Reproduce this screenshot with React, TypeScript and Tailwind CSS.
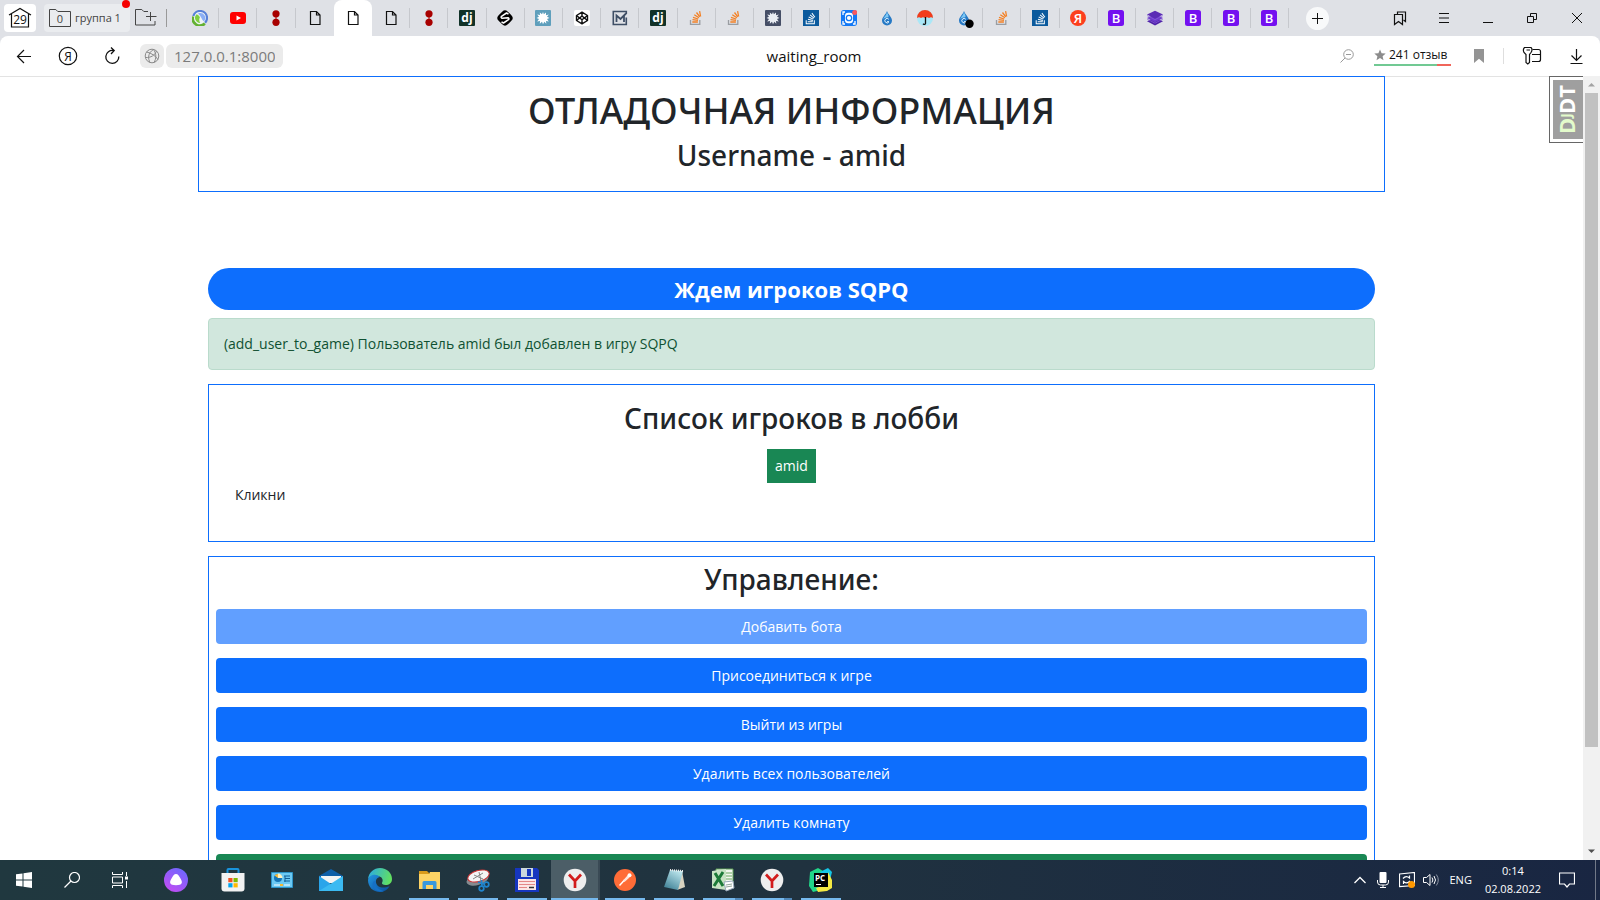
import type { ReactNode } from "react";
import { FaStackOverflow } from "react-icons/fa";

type IconProps = { children: ReactNode; size?: number; box?: number };

function Svg({ children, size = 16, box = 16 }: IconProps) {
  return (
    <svg width={size} height={size} viewBox={`0 0 ${box} ${box}`} fill="none" aria-hidden="true" className="block shrink-0">
      {children}
    </svg>
  );
}

/* ---------- Tab favicons ---------- */

const Clojure = () => (
  <Svg>
    <circle cx="8" cy="8" r="7" fill="#eef3f5" />
    <path d="M1.300 6A7 7 0 0 1 15 7.500 7 7 0 0 1 13 12.800" stroke="#5881d8" strokeWidth="2.200" />
    <path d="M1 6.500a7.100 7.100 0 0 0 11.800 7" stroke="#63b132" strokeWidth="2.600" />
    <path d="M7 3.100a5 5 0 0 1 5 8.100C9.800 10.500 9.500 6 6 3.700Z" fill="#8aaef5" />
    <path d="M8.200 13A5 5 0 0 1 4.700 4.300c2 .9 2.700 2 3.200 3.200-1 1.500-.9 3.500.3 5.500Z" fill="#7fcf3f" />
  </Svg>
);
const Youtube = () => (
  <Svg>
    <rect y="2" width="16" height="12" rx="3" fill="#f00" />
    <path d="m6.500 5.500 4.500 2.500-4.500 2.500Z" fill="#fff" />
  </Svg>
);
const Dots = () => (
  <Svg>
    <path d="M8 2v12" stroke="#a80000" />
    <circle cx="8" cy="3.800" r="3.600" fill="#a80000" />
    <circle cx="8" cy="12.300" r="3.600" fill="#a80000" />
  </Svg>
);
const File = () => (
  <Svg>
    <path d="M3.500 1.500h6l3.500 3.500v9.500H3.500Z M9.500 1.500V5H13" stroke="#111" strokeWidth="1.200" />
  </Svg>
);
const Django = () => (
  <Svg>
    <rect width="16" height="16" rx="1" fill="#113228" />
    <text x="8" y="11.500" textAnchor="middle" fontSize="12" fontWeight="700" fill="#fff" fontFamily="Open Sans, sans-serif">dj</text>
  </Svg>
);
const Slash = () => (
  <Svg>
    <rect x="1.500" y="1.500" width="13" height="13" rx="4" transform="rotate(45 8 8)" fill="#000" />
    <path d="M11.500 4.200 9.500 3 4.500 6.300q-1 1.200.5 1.900L11 7.800q1.600.6.500 1.900L6.500 13 4.500 11.800" stroke="#fff" strokeWidth="1.500" strokeLinejoin="round" />
  </Svg>
);
function Burst({ bg, center }: { bg: string; center: string }) {
  return (
    <Svg>
      <rect width="16" height="16" rx="1" fill={bg} />
      <path d="m8 2 .9 2.300L11 2.500v2.700l2.800-.7L12 6.800l2.500 1.200-2.500 1 1.800 2.500-2.800-.5.300 2.800-2-2L8 14.300l-1-2.500-2.200 2 .2-2.900-2.800.6L4 9 1.500 8 4 6.800 2.200 4.500 5 5.100l-.2-2.600 2.200 1.800Z" fill={center} />
    </Svg>
  );
}
const Codepen = () => (
  <Svg>
    <rect width="16" height="16" rx="2" fill="#fff" />
    <path d="m8 2.200 5.500 3.300v5L8 13.800l-5.500-3.300v-5ZM8 2.500v3.400M8 10v3.500M2.800 5.800 8 9.800l5.200-4M2.800 10.300 8 6l5.200 4.300" stroke="#111" strokeWidth="1.400" strokeLinejoin="round" />
  </Svg>
);
const Letter = () => (
  <Svg>
    <path d="M14.300 4V1.500H1.300v13h13V7.500" stroke="#3f4f66" strokeWidth="1.600" />
    <path d="M4.500 12V5.500L8.500 9 14 3.500M12 6v6" stroke="#3f4f66" strokeWidth="1.800" />
  </Svg>
);
const StackOrange = () => (
  <Svg>
    <path d="M2.500 10v4.300h9.300V10" stroke="#9a9da2" strokeWidth="1.300" />
    <path d="M4.300 12h5.600M4.500 9.700l5.500.6M5 7.300l5.200 1.700M6.300 4.700l4.600 3M8.500 2.500l3.300 4.300M11.600 1.200l1 5.300" stroke="#f48024" strokeWidth="1.300" />
  </Svg>
);
const StackBlue = () => (
  <span className="grid size-4 place-items-center bg-[#0b5a9d] text-[13px] text-white">
    <FaStackOverflow aria-hidden="true" />
  </span>
);
const Target = () => (
  <Svg>
    <rect width="16" height="16" rx="3" fill="#1479f5" />
    <path d="M4 2H2v3M12 14h2v-3M2 11v3h2" stroke="#fff" strokeWidth="1.300" />
    <rect x="4" y="2.800" width="8" height="10.400" rx="3" fill="#fff" />
    <circle cx="8" cy="8" r="2.700" stroke="#1479f5" strokeWidth="1.300" />
    <circle cx="13.700" cy="2.500" r="2.500" fill="#f8595f" />
  </Svg>
);
function Drop({ dot = false }: { dot?: boolean }) {
  return (
    <Svg size={20} box={20}>
      <path d="M10 3c1 3.500 5 6 5 9.500a5 5 0 0 1-10 0C5 9 9 6.500 10 3Z" fill="#2679c5" />
      <path d="M9.800 3.500C10 7 7 8.500 6.200 11.500c1-1.500 3-2.500 5.300-2.200C12 7 10.200 5.500 9.800 3.500Z" fill="#7cc8f5" />
      <path d="M11.800 11.300a2.200 2.200 0 1 0 .2 2.400h-2" stroke="#e6f5ff" strokeWidth="1" />
      {dot && <circle cx="15.500" cy="15.800" r="4.200" fill="#000" />}
    </Svg>
  );
}
const Umbrella = () => (
  <Svg>
    <circle cx="8" cy="8" r="8" fill="#a9e7f7" />
    <path d="M0 8a8 8 0 0 1 16 0q-2-1.500-4 0-2-1.500-4 0-2-1.500-4 0-2-1.500-4 0Z" fill="#f23c1b" />
    <path d="M8.500 7v6.500q-.8 1.800-2.500.2" stroke="#111" strokeWidth="1.300" />
  </Svg>
);
const YandexSmall = () => (
  <Svg>
    <circle cx="8" cy="8" r="8" fill="#fc3f1d" />
    <text x="8" y="12.500" textAnchor="middle" fontSize="13" fontWeight="600" fill="#fff" fontFamily="Open Sans, sans-serif">Я</text>
  </Svg>
);
const Bootstrap = () => (
  <Svg>
    <rect width="16" height="16" rx="2.500" fill="#7410f0" />
    <text x="8" y="12.500" textAnchor="middle" fontSize="13" fontWeight="600" fill="#fff" fontFamily="Open Sans, sans-serif">B</text>
  </Svg>
);
const Layers = () => (
  <Svg>
    <path d="m8 7.500 8 3.800L8 15.500l-8-4.200Z" fill="#4f22a8" />
    <path d="m8 4 8 4-8 4.200L0 8Z" fill="#6d3bcb" />
    <path d="m8 .8 8 3.700L8 8.700 0 4.500Z" fill="#5b2cb5" />
    <path d="m0 5.500 8 4.200 8-4.200M0 9l8 4.200L16 9" stroke="#8a60dc" strokeWidth=".7" />
  </Svg>
);

type Tab = { name: string; icon: ReactNode };
const tabs: Tab[] = [
  { name: "Clojure", icon: <Clojure /> },
  { name: "YouTube", icon: <Youtube /> },
  { name: "Dots", icon: <Dots /> },
  { name: "Page", icon: <File /> },
  { name: "waiting_room", icon: <File /> },
  { name: "Page", icon: <File /> },
  { name: "Dots", icon: <Dots /> },
  { name: "Django", icon: <Django /> },
  { name: "Notes", icon: <Slash /> },
  { name: "Burst", icon: <Burst bg="#5f9fbc" center="#fff" /> },
  { name: "CodePen", icon: <Codepen /> },
  { name: "M", icon: <Letter /> },
  { name: "Django", icon: <Django /> },
  { name: "Stack Overflow", icon: <StackOrange /> },
  { name: "Stack Overflow", icon: <StackOrange /> },
  { name: "Burst", icon: <Burst bg="#454e66" center="#e9edf3" /> },
  { name: "Stack Overflow", icon: <StackBlue /> },
  { name: "Target", icon: <Target /> },
  { name: "Drop", icon: <Drop /> },
  { name: "Umbrella", icon: <Umbrella /> },
  { name: "Drop", icon: <Drop dot /> },
  { name: "Stack Overflow", icon: <StackOrange /> },
  { name: "Stack Overflow", icon: <StackBlue /> },
  { name: "Яндекс", icon: <YandexSmall /> },
  { name: "Bootstrap", icon: <Bootstrap /> },
  { name: "Layers", icon: <Layers /> },
  { name: "Bootstrap", icon: <Bootstrap /> },
  { name: "Bootstrap", icon: <Bootstrap /> },
  { name: "Bootstrap", icon: <Bootstrap /> },
];
const ACTIVE_TAB = 4;

function TabBar() {
  return (
    <header className="flex h-9 shrink-0 items-stretch bg-[#dfe1e6]">
      <div className="flex w-[181px] shrink-0 items-center pl-1">
        <button aria-label="29 вкладок" className="grid h-7 w-8 place-items-center rounded bg-white">
          <Svg size={24} box={24}>
            <path d="m1 9 11-6.500L23 9M3.500 8v13h17V8" stroke="#111" strokeWidth="1.200" />
            <text x="12" y="17.500" textAnchor="middle" fontSize="12" fill="#111" fontFamily="Open Sans, sans-serif">29</text>
          </Svg>
        </button>
        <div className="relative ml-2">
          <button className="flex h-7 w-[86px] items-center gap-1 rounded bg-[#eaecef] pl-[5px] font-['Open_Sans',sans-serif] text-[11px] whitespace-nowrap text-[#444]">
            <Svg size={22} box={22}>
              <path d="M.5 2.500h6.300l2 2h12.700v15H.5Z" stroke="#444" />
              <text x="11" y="16" textAnchor="middle" fontSize="11" fill="#444" fontFamily="Open Sans, sans-serif">0</text>
            </Svg>
            группа 1
          </button>
          <span className="absolute -top-1 right-0 size-2 rounded-full bg-[#f50000]" />
        </div>
        <button aria-label="Новая группа" className="ml-[5px]">
          <Svg size={22} box={22}>
            <path d="M13 4.500H8.800l-2-2H.5v15.500h19.500v-4M15.500 5v9M11 9.500h10.500" stroke="#444" />
          </Svg>
        </button>
        <span className="ml-[9px] h-[18px] w-px bg-[#999]" />
      </div>
      <nav aria-label="Вкладки" className="flex min-w-0 flex-1">
        {tabs.map((tab, i) => (
          <div key={i} className={i === ACTIVE_TAB ? "flex min-w-0 flex-1 rounded-t-lg bg-white" : "flex min-w-0 flex-1 items-center"}>
            <button aria-label={tab.name} className="grid h-full flex-1 place-items-center">{tab.icon}</button>
            {i !== ACTIVE_TAB && i !== ACTIVE_TAB - 1 && <span className="h-5 w-px bg-[#c6c8cd]" />}
          </div>
        ))}
      </nav>
      <div className="flex w-[311px] shrink-0 items-center pl-[17px]">
        <button aria-label="Новая вкладка" className="grid size-[23px] place-items-center rounded-full bg-[#f8f9fa]">
          <Svg size={11} box={11}><path d="M5.500 0v11M0 5.500h11" stroke="#111" /></Svg>
        </button>
        <div className="ml-auto flex">
          <button aria-label="Закладки" className="grid h-9 w-11 place-items-center">
            <Svg>
              <path d="M2.500 4.500h8v10l-4-3-4 3Z" stroke="#111" strokeWidth="1.200" />
              <path d="M5.500 4V2h8v9.500l-2-1.500" stroke="#111" strokeWidth="1.200" />
            </Svg>
          </button>
          <button aria-label="Меню" className="grid h-9 w-11 place-items-center">
            <Svg size={10} box={10}><path d="M0 .5h10M0 5h10M0 9.500h10" stroke="#111" /></Svg>
          </button>
          <button aria-label="Свернуть" className="grid h-9 w-11 place-items-center">
            <Svg size={10} box={10}><path d="M0 9.500h10" stroke="#111" /></Svg>
          </button>
          <button aria-label="Развернуть" className="grid h-9 w-11 place-items-center">
            <Svg size={10} box={10}><path d="M.5 3.500h6v6h-6ZM3.500 3V.5h6v6H7" stroke="#111" /></Svg>
          </button>
          <button aria-label="Закрыть" className="grid h-9 w-[46px] place-items-center">
            <Svg size={10} box={10}><path d="m0 0 10 10M10 0 0 10" stroke="#111" /></Svg>
          </button>
        </div>
      </div>
    </header>
  );
}

function Toolbar() {
  return (
    <div className="shrink-0 bg-[#dfe1e6]">
      <div className="flex h-10 items-center rounded-t-lg bg-white">
        <div className="flex w-[288px] shrink-0 items-center">
          <button aria-label="Назад" className="grid h-10 w-12 place-items-center">
            <Svg><path d="M15 8.500H1.500M8 2 1.500 8.500 8 15" stroke="#111" strokeWidth="1.200" /></Svg>
          </button>
          <button aria-label="Яндекс" className="grid h-10 w-10 place-items-center">
            <Svg size={20} box={20}>
              <circle cx="10" cy="10" r="8.700" stroke="#111" strokeWidth="1.200" />
              <text x="10" y="14.500" textAnchor="middle" fontSize="12" fill="#111" fontFamily="Open Sans, sans-serif">Я</text>
            </Svg>
          </button>
          <button aria-label="Обновить" className="grid h-10 w-[48px] place-items-center">
            <Svg size={18} box={18}><path d="M10.500 3.500a6.500 6.500 0 1 0 5.300 6M8 .5l3.200 3L8 7" stroke="#111" strokeWidth="1.300" /></Svg>
          </button>
          <button aria-label="Сведения о сайте" className="ml-1 grid size-6 place-items-center rounded-md bg-[#ebebeb]">
            <Svg>
              <circle cx="8" cy="8" r="6.800" stroke="#8a8a8a" />
              <path d="M9.500 1.500C3.500 5 4 11 6 14.500M2.500 4c5 1 9 4 11.500 7.500M1.500 9.500C7 10 11 7 12.500 3M9.500 1.500c3 4 3 9 .5 13" stroke="#8a8a8a" />
            </Svg>
          </button>
          <input aria-label="Адрес" defaultValue="127.0.0.1:8000" className="ml-0.5 h-6 w-[117px] rounded-md bg-[#ebebeb] px-2 font-['Open_Sans',sans-serif] text-[15px] text-[#7b7b7b] outline-none" />
        </div>
        <p className="flex-1 text-center font-['Open_Sans',sans-serif] text-[15px] text-[#111]">waiting_room</p>
        <div className="flex w-[260px] shrink-0 items-center">
          <button aria-label="Масштаб" className="grid w-[14px] place-items-center">
            <Svg size={14} box={14}>
              <circle cx="8.500" cy="5.500" r="4.800" stroke="#999" />
              <path d="M5 9 .5 13.500M6 5.500h5" stroke="#999" />
            </Svg>
          </button>
          <button className="ml-5 flex flex-col">
            <span className="flex h-[18px] items-center gap-[3px] pr-1 font-['Open_Sans',sans-serif] text-[12px] whitespace-nowrap text-[#111]">
              <Svg size={12} box={12}><path d="m6 .5 1.600 3.800 4.100.3-3.100 2.700.9 4L6 9.100l-3.500 2.200.9-4L.3 4.600l4.100-.3Z" fill="#8c8c8c" /></Svg>
              241 отзыв
            </span>
            <span className="flex h-0.5 w-full">
              <span className="flex-[63] bg-[#71c993]" />
              <span className="flex-[14] bg-[#f0655a]" />
            </span>
          </button>
          <div className="ml-auto flex items-center">
            <button aria-label="Добавить закладку"><Svg size={14} box={14}><path d="M2 0h10v14L7 9.800 2 14Z" fill="#949494" /></Svg></button>
            <span className="ml-[17px] h-4 w-px bg-[#dedede]" />
            <button aria-label="Пароли и карты" className="ml-[18px]">
              <Svg size={20} box={20}>
                <path d="M2.500 1.500H9q2 2 0 5L7.500 8.500v8L5.800 18 4 16.500v-8L2 6.500q-1.500-3 .5-5ZM4.500 4H8" stroke="#111" strokeWidth="1.200" />
                <path d="M10.500 3.500h6q2 0 2 2v8q0 2-2 2H10M10 8.500h8.500" stroke="#111" strokeWidth="1.200" />
              </Svg>
            </button>
            <button aria-label="Загрузки" className="mr-[14px] ml-[28px]">
              <Svg><path d="M6.500 1v11M1.500 7.500l5 5 5-5M.5 15.500h12" stroke="#111" strokeWidth="1.200" /></Svg>
            </button>
          </div>
        </div>
      </div>
    </div>
  );
}

/* ---------- Page content ---------- */

const actions = [
  { label: "Добавить бота", style: "bg-[#619fff]", disabled: true },
  { label: "Присоединиться к игре", style: "bg-[#0d6efd]", disabled: false },
  { label: "Выйти из игры", style: "bg-[#0d6efd]", disabled: false },
  { label: "Удалить всех пользователей", style: "bg-[#0d6efd]", disabled: false },
  { label: "Удалить комнату", style: "bg-[#0d6efd]", disabled: false },
];

function Page() {
  return (
    <main className="min-w-0 flex-1 overflow-hidden font-['Open_Sans','Noto_Sans',sans-serif] text-[14px] text-[#212529]">
      <div className="flex">
        <div className="flex-1 border-t border-[#e3e3e3]" />
        <section className="h-[116px] w-3/4 border border-[#0d6efd] pt-3 text-center font-['Noto_Sans',sans-serif]">
          <h1 className="text-[36px] leading-[44px] font-medium">ОТЛАДОЧНАЯ ИНФОРМАЦИЯ</h1>
          <h2 className="mt-1 text-[28px] leading-9 font-medium">Username - amid</h2>
        </section>
        <div className="flex-1 border-t border-[#e3e3e3]" />
      </div>
      <div className="mx-auto w-3/4 px-[10px] pt-[76px]">
        <h3 className="rounded-full bg-[#0d6efd] py-[6px] text-center text-[22px] leading-[30px] font-bold text-white">Ждем игроков SQPQ</h3>
        <p role="alert" className="mt-2 rounded border border-[#badbcc] bg-[#d1e7dd] px-[15px] py-[14px] leading-[22px] text-[#0f5132]">
          (add_user_to_game) Пользователь amid был добавлен в игру SQPQ
        </p>
        <section className="mt-[14px] h-[158px] border border-[#0d6efd] px-[26px] pt-[15px]">
          <h2 className="text-center font-['Noto_Sans',sans-serif] text-[28px] leading-9 font-medium">Список игроков в лобби</h2>
          <div className="mt-[13px] flex justify-center">
            <span className="bg-[#198754] px-2 py-[6px] leading-[22px] text-white">amid</span>
          </div>
          <p className="leading-6">Кликни</p>
        </section>
        <section className="mt-[14px] border border-[#0d6efd] px-[7px] pt-1 pb-4">
          <h2 className="text-center font-['Noto_Sans',sans-serif] text-[28px] leading-9 font-medium">Управление:</h2>
          <div className="mt-3 flex flex-col gap-[14px]">
            {actions.map((a) => (
              <button key={a.label} disabled={a.disabled} className={`h-[35px] shrink-0 rounded text-white ${a.style}`}>
                {a.label}
              </button>
            ))}
            <button aria-label="Начать игру" className="h-[35px] shrink-0 rounded bg-[#198754]" />
          </div>
        </section>
      </div>
    </main>
  );
}

function Scrollbar() {
  return (
    <div aria-hidden="true" className="flex w-[17px] shrink-0 flex-col items-center bg-[#f1f1f1]">
      <div className="grid h-[17px] place-items-center"><Svg size={7} box={7}><path d="M0 5.500 3.500 2 7 5.500Z" fill="#a3a3a3" /></Svg></div>
      <div className="w-[13px] flex-[654] bg-[#c1c1c1]" />
      <div className="flex-[96]" />
      <div className="grid h-[17px] place-items-center"><Svg size={7} box={7}><path d="M0 1.500 3.500 5 7 1.500Z" fill="#505050" /></Svg></div>
    </div>
  );
}

/* ---------- Taskbar ---------- */

const YandexBrowser = () => (
  <Svg size={24} box={24}>
    <circle cx="12" cy="12" r="11.300" fill="#eee" />
    <path d="m6 6.500 6 6.500 6-6.500M12 12.500v7.500" stroke="#d21c1c" strokeWidth="2.700" />
  </Svg>
);

type TaskbarApp = { name: string; icon: ReactNode; running?: boolean; active?: boolean; stacked?: boolean };
const apps: TaskbarApp[] = [
  {
    name: "Microsoft Store",
    icon: (
      <Svg size={24} box={24}>
        <path d="M6.500 6V2q0-.9.900-.9h9.200q.9 0 .9.900v4" stroke="#1993dc" strokeWidth="2" />
        <path d="M.5 5h23v15.500q0 3-3 3h-17q-3 0-3-3Z" fill="#f2f2f2" />
        <path d="M7.300 10h4.200v4.200H7.300Z" fill="#f25022" /><path d="M12.500 10h4.200v4.200h-4.200Z" fill="#7fba00" />
        <path d="M7.300 15.200h4.200v4.200H7.300Z" fill="#00a4ef" /><path d="M12.500 15.200h4.200v4.200h-4.200Z" fill="#ffb900" />
      </Svg>
    ),
  },
  {
    name: "Панель управления",
    icon: (
      <Svg size={22} box={22}>
        <path d="M.5 3.500h21v15H.5Z" fill="#6cc9f3" stroke="#2d93c7" />
        <circle cx="7" cy="9" r="4" fill="#1676b8" /><path d="M7 9V4.500A4.500 4.500 0 0 1 11.500 9Z" fill="#fff2c0" /><path d="M7 9 3.500 6.500A4 4 0 0 1 7 5Z" fill="#f6b93b" />
        <path d="M13 7h6M14 9.500h5M13 12h6M14 7v6" stroke="#135f95" /><path d="M3 16h6M13 16h6" stroke="#fff" /><path d="M9 16h3" stroke="#f7b731" strokeWidth="2" />
      </Svg>
    ),
  },
  {
    name: "Почта",
    icon: (
      <Svg size={24} box={24}>
        <path d="M0 8 12 1l12 7v4H0Z" fill="#0f5fa8" /><path d="M2 8h20v7H2Z" fill="#f4f4f4" />
        <path d="m0 8 12 8 12-8v15H0Z" fill="#2aa5ea" /><path d="M0 23 24 8v15Z" fill="#43c3f5" opacity=".7" />
      </Svg>
    ),
  },
  {
    name: "Edge",
    icon: (
      <Svg size={24} box={24}>
        <defs>
          <linearGradient id="edge-top" x1="0" y1="0" x2="24" y2="8" gradientUnits="userSpaceOnUse"><stop stopColor="#2aa9e8" /><stop offset="1" stopColor="#62e05f" /></linearGradient>
          <linearGradient id="edge-body" x1="0" y1="8" x2="16" y2="24" gradientUnits="userSpaceOnUse"><stop stopColor="#2292dd" /><stop offset="1" stopColor="#0c55a3" /></linearGradient>
        </defs>
        <path d="M0 11C1 4 6 0 12 0c7 0 12 5 12 11 0 4-3 6-6.500 6-2.500 0-4-1-3.500-2.200 1.300-2 .8-5.300-2.500-6.300C7 7 2.500 8 0 11Z" fill="url(#edge-top)" />
        <path d="M0 12c1-5 8-7 12-3-3 .5-4.500 3-4 5.500C8.800 19 14 21 21.500 18.300 19 22.500 15 24 12 24 5 24 0 19 0 12Z" fill="url(#edge-body)" />
        <path d="M8 13c-2 4 1.500 9 8 10-5 2-11-1.500-11.500-6C4.300 14.500 6 12 8 13Z" fill="#1670c4" />
      </Svg>
    ),
  },
  {
    name: "Проводник",
    running: true,
    icon: (
      <Svg size={24} box={24}>
        <path d="M2 3h8l2 2v3H2Z" fill="#d99a1b" /><path d="M2 6h10l1-2h10v17H2Z" fill="#fdd365" />
        <path d="M5.500 21v-6.500q0-1.500 1.500-1.500h11q1.500 0 1.500 1.500V21H16v-4H9v4Z" fill="#3998dd" />
      </Svg>
    ),
  },
  {
    name: "Ножницы",
    running: true,
    icon: (
      <Svg size={24} box={24}>
        <ellipse cx="11.500" cy="11.500" rx="11.300" ry="5.500" transform="rotate(-16 11.500 11.500)" fill="#858b90" />
        <ellipse cx="12.500" cy="8" rx="11" ry="5.500" transform="rotate(-16 12.500 8)" fill="#f5f5f5" stroke="#d23535" />
        <path d="m7 11 10-6M8 7l9 4M13 4l2 9" stroke="#888" /><circle cx="15.500" cy="20.500" r="2.300" stroke="#2185ce" strokeWidth="1.700" />
        <circle cx="20.500" cy="16.500" r="2.300" stroke="#2185ce" strokeWidth="1.700" /><path d="m12 14 6.500 2M16 18.500 15.500 12" stroke="#2185ce" strokeWidth="1.700" />
      </Svg>
    ),
  },
  {
    name: "Total Commander",
    running: true,
    icon: (
      <Svg size={24} box={24}>
        <path d="M0 0h22l2 2v22H0Z" fill="#1636bf" /><path d="M6 0h12v9H6Z" fill="#ccd8dc" /><path d="M12 1h4v7h-4Z" fill="#1636bf" />
        <path d="M3 11h18v11H3Z" fill="#fbe5e5" /><path d="M4 13.500h16M4 16.500h16M4 19.500h8" stroke="#e38787" /><path d="M14 19.500h5" stroke="#333" strokeWidth="1.500" />
      </Svg>
    ),
  },
  { name: "Яндекс Браузер", running: true, active: true, icon: <YandexBrowser /> },
  {
    name: "Postman",
    running: true,
    icon: (
      <Svg size={24} box={24}>
        <circle cx="12" cy="12" r="11" fill="#ff6c37" />
        <path d="m6.500 17.500 5-5.500" stroke="#fff" strokeWidth="1.500" /><path d="m10 12.500 4.500-5 2 2-5 4.500Z" fill="#ffe5dc" /><circle cx="16.500" cy="7.300" r="2" fill="#fff" />
      </Svg>
    ),
  },
  {
    name: "Блокнот",
    running: true,
    icon: (
      <Svg size={24} box={24}>
        <defs><linearGradient id="note" x1="18" y1="2" x2="6" y2="22" gradientUnits="userSpaceOnUse"><stop stopColor="#c4ecf2" /><stop offset="1" stopColor="#3f8196" /></linearGradient></defs>
        <path d="m20 3 3 16-8 3Z" fill="#d8d3c0" /><path d="m8 2 13 1-5 19-14-3Z" fill="url(#note)" /><path d="m8 2 13 1" stroke="#eee" strokeWidth="2" strokeDasharray="1 1" />
      </Svg>
    ),
  },
  {
    name: "Excel",
    running: true,
    stacked: true,
    icon: (
      <Svg size={24} box={24}>
        <path d="M5 1h17v18H5Z" fill="#f3f7f0" stroke="#5a9f54" /><path d="M15 5h6M15 8h6M15 11h6" stroke="#69a95f" />
        <path d="m1 3 14-2v21L1 20Z" fill="#c8e3c4" /><path d="m4 5 8 13M12 4 3 18" stroke="#1c7a38" strokeWidth="3" />
        <path d="m13 14 9-1 1 7-8 3Z" fill="#fff" stroke="#9ab" /><path d="m15 17 6-1M15 19l6-1" stroke="#92a59a" />
      </Svg>
    ),
  },
  { name: "Яндекс Браузер", running: true, stacked: true, icon: <YandexBrowser /> },
  {
    name: "PyCharm",
    running: true,
    icon: (
      <Svg size={24} box={24}>
        <path d="M1 4 9 0l5 3-2 19-8 2-4-6Z" fill="#21d789" /><path d="m11 4 8-4 4 4-2 8Z" fill="#15c7e7" />
        <path d="m19 4 4 8v8l-5 3-9 1-2-4 12-4Z" fill="#f4e943" /><path d="M5 5h14v14H5Z" fill="#000" />
        <text x="6" y="12.500" fontSize="8" fontWeight="700" fill="#fff" fontFamily="Open Sans, sans-serif">PC</text><path d="M7 16.500h5" stroke="#fff" />
      </Svg>
    ),
  },
];

function Taskbar() {
  return (
    <footer className="flex h-10 shrink-0 items-stretch bg-linear-to-r from-[#20383f] via-[#20323f] to-[#192642] text-white">
      <button aria-label="Пуск" className="grid w-12 place-items-center">
        <Svg><path d="M0 2.300 6.500 1.400v6.100H0ZM7.500 1.200 16 0v7.500H7.500ZM0 8.500h6.500v6.100L0 13.700ZM7.500 8.500H16V16l-8.500-1.200Z" fill="#fff" /></Svg>
      </button>
      <button aria-label="Поиск" className="grid w-12 place-items-center">
        <Svg><circle cx="10.500" cy="5.500" r="5" stroke="#fff" strokeWidth="1.200" /><path d="M7 9 .5 15.500" stroke="#fff" strokeWidth="1.200" /></Svg>
      </button>
      <button aria-label="Представление задач" className="grid w-12 place-items-center">
        <Svg><path d="M.5 0v2.500h10V0M.5 5h10v6H.5ZM.5 16v-2.500h10V16M14.500 0v4M14.500 9v7" stroke="#fff" /><path d="M13 4.500h3v3h-3Z" fill="#fff" /></Svg>
      </button>
      <button aria-label="Алиса" className="grid w-16 place-items-center">
        <Svg size={24} box={24}>
          <defs><linearGradient id="alice" x1="20" y1="0" x2="4" y2="24" gradientUnits="userSpaceOnUse"><stop stopColor="#6a68ff" /><stop offset="1" stopColor="#c54cf2" /></linearGradient></defs>
          <circle cx="12" cy="12" r="12" fill="url(#alice)" />
          <path d="M12 6c2 0 3 2 4.500 4.500 2.500 4 2 6.700-4.500 6.700s-7-2.700-4.500-6.700C9 8 10 6 12 6Z" fill="#fff" />
        </Svg>
      </button>
      {apps.map((app, i) => (
        <button key={i} aria-label={app.name} className={app.active ? "flex w-[49px] flex-col items-center border-r-2 border-[#3a4a55] bg-[#4c5e67]" : "flex w-[49px] flex-col items-center"}>
          <span className="grid flex-1 place-items-center pt-0.5">{app.icon}</span>
          <span className={app.active ? "h-0.5 w-full bg-[#76b9ed]" : app.running ? "flex h-0.5 w-10 justify-end bg-[#76b9ed]" : "h-0.5 w-10"}>
            {app.stacked && <span className="w-2 bg-[#4f87b8]" />}
          </span>
        </button>
      ))}
      <div className="ml-auto flex items-center font-['Open_Sans',sans-serif] text-[11px]">
        <button aria-label="Скрытые значки" className="mr-[9px]"><Svg size={12} box={12}><path d="m.5 9 5.500-5.500L11.500 9" stroke="#fff" strokeWidth="1.300" /></Svg></button>
        <button aria-label="Микрофон" className="mr-2">
          <Svg><rect x="4.500" width="7" height="11" rx="1" fill="#fff" /><path d="M2.500 8v2q0 3 3 3h5q3 0 3-3V8M8 13v3M5 15.500h6" stroke="#fff" /></Svg>
        </button>
        <button aria-label="Обновления" className="mr-2">
          <Svg>
            <path d="M.5 2 15.500.5v13L.5 14.500Z" stroke="#fff" strokeWidth="1.200" />
            <path d="M4 6.500q3-3.500 6.500-.5V3.500M11 9q-3 3.500-6.500.5V12" stroke="#fff" strokeWidth="1.200" /><circle cx="12.500" cy="12.500" r="3.500" fill="#ff9800" />
          </Svg>
        </button>
        <button aria-label="Громкость" className="mr-2.5">
          <Svg><path d="M.5 5.500h3L7 2.500v11l-3.500-3h-3Z" stroke="#fff" /><path d="M9 5.500q1.800 2.500 0 5M11 4q3 4 0 8" stroke="#fff" /><path d="M13.300 2.500q4 5.500 0 11" stroke="#8b93a3" /></Svg>
        </button>
        <button>ENG</button>
        <button className="mx-[13px] text-center leading-[18px]">
          <time className="block">0:14</time>
          <time className="block">02.08.2022</time>
        </button>
        <button aria-label="Уведомления" className="mx-[5px]">
          <Svg><path d="M.5 1h15v11h-5L8 15l-2.500-3h-5Z" stroke="#fff" strokeWidth="1.200" /></Svg>
        </button>
        <span className="mr-1 ml-[15px] h-10 w-px bg-[#717988]" />
      </div>
    </footer>
  );
}

export default function App() {
  return (
    <div className="flex h-screen flex-col overflow-hidden bg-white">
      <TabBar />
      <Toolbar />
      <div className="relative flex min-h-0 flex-1">
        <Page />
        <a href="#debug" aria-label="Django Debug Toolbar" className="absolute top-0 right-[17px] border border-r-0 border-[#666] bg-white py-[3px] pl-[3px]">
          <span className="flex h-[59px] w-[30px] rotate-180 items-center justify-center bg-[#9f9f9f] pl-1 font-['Open_Sans',sans-serif] text-[22px] leading-[26px] font-bold text-white [writing-mode:vertical-rl]">
            <span className="text-[#e3fbcb]">D<span className="text-[14px]">J</span></span>DT
          </span>
        </a>
        <Scrollbar />
      </div>
      <Taskbar />
    </div>
  );
}
